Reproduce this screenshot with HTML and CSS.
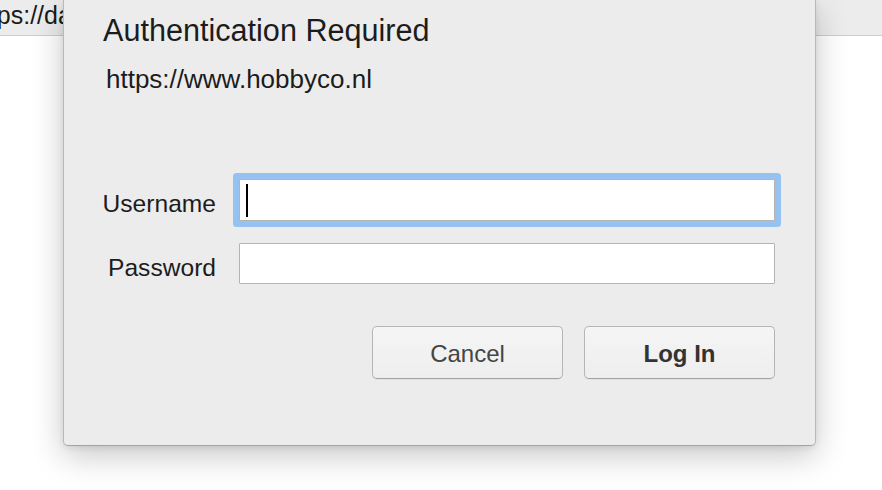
FILE: index.html
```html
<!DOCTYPE html>
<html lang="en">
<head>
<meta charset="utf-8">
<title>Authentication Required</title>
<link rel="stylesheet" href="styles.css">
</head>
<body>
  <header class="topbar">
    <div class="address-clip"><span class="address">https://da</span></div>
  </header>
  <main class="page"></main>

  <section class="dialog" role="dialog" aria-labelledby="dlg-title">
    <h1 class="title" id="dlg-title">Authentication Required</h1>
    <p class="origin">https://www.hobbyco.nl</p>

    <form class="form">
      <label class="label" for="user">Username</label>
      <div class="field-wrap">
        <input class="field focused" id="user" type="text">
        <span class="caret"></span>
      </div>
      <label class="label" for="pass">Password</label>
      <div class="field-wrap">
        <input class="field" id="pass" type="password">
      </div>

      <div class="actions">
        <button type="button" class="btn">Cancel</button>
        <button type="submit" class="btn btn-default">Log In</button>
      </div>
    </form>
  </section>
</body>
</html>
```

FILE: styles.css
```css
* { box-sizing: border-box; }

html, body {
  margin: 0;
  padding: 0;
  width: 882px;
  height: 490px;
  overflow: hidden;
  background: #ffffff;
  font-family: "Liberation Sans", Arial, sans-serif;
  color: #1a1a1a;
}

.topbar {
  height: 36px;
  background: #ececec;
  border-bottom: 1px solid #cdcdcd;
  overflow: hidden;
  white-space: nowrap;
}

.address-clip {
  width: 63px;
  overflow: hidden;
}

.address {
  display: block;
  margin-left: -31px;
  font-size: 25px;
  line-height: 30px;
  color: #1a1a1a;
}

.page {
  height: 454px;
  background: #ffffff;
}

.dialog {
  position: absolute;
  left: 63px;
  top: 0;
  width: 753px;
  height: 446px;
  background: #ececec;
  border: 1px solid #b9b9b9;
  border-top: none;
  border-bottom-color: #a3a3a3;
  border-radius: 0 0 5px 5px;
  box-shadow: 0 10px 32px rgba(0, 0, 0, 0.22), 0 2px 6px rgba(0, 0, 0, 0.08);
  padding: 12px 40px 0 38px;
}

.title {
  margin: 0 0 0 1px;
  font-size: 30.6px;
  line-height: 36px;
  font-weight: normal;
  color: #1c1c1c;
}

.origin {
  margin: 16px 0 0 4px;
  font-size: 26px;
  line-height: 30px;
  color: #1c1c1c;
}

.form {
  margin-top: 85px;
  display: grid;
  grid-template-columns: 114px 536px;
  column-gap: 23px;
  row-gap: 22px;
  align-items: center;
}

.label {
  justify-self: end;
  padding-top: 8px;
  font-size: 24.6px;
  color: #1c1c1c;
}

.field-wrap {
  position: relative;
  height: 42px;
}

.field-wrap + .label + .field-wrap {
  height: 41px;
}

.field {
  display: block;
  width: 100%;
  height: 100%;
  margin: 0;
  border: 1px solid #b4b4b4;
  border-radius: 1px;
  background: #ffffff;
  outline: none;
  padding: 0 6px;
  font-family: inherit;
  font-size: 24px;
}

.field.focused {
  box-shadow: 0 0 0 6px #96c2f2;
}

.caret {
  position: absolute;
  left: 7px;
  top: 5px;
  width: 2px;
  height: 33px;
  background: #000000;
}

.actions {
  grid-column: 1 / -1;
  margin-top: 20px;
  display: flex;
  justify-content: flex-end;
  gap: 21px;
}

.btn {
  width: 191px;
  height: 53px;
  margin: 0;
  border: 1px solid #b5b5b5;
  border-bottom-color: #a2a2a2;
  border-radius: 5px;
  background: linear-gradient(#f5f5f5, #eeeeee);
  box-shadow: 0 1px 0 rgba(0, 0, 0, 0.04);
  font-family: inherit;
  font-size: 24px;
  color: #454545;
  padding: 3px 0 0;
}

.btn-default {
  font-weight: bold;
  color: #333333;
}
```
